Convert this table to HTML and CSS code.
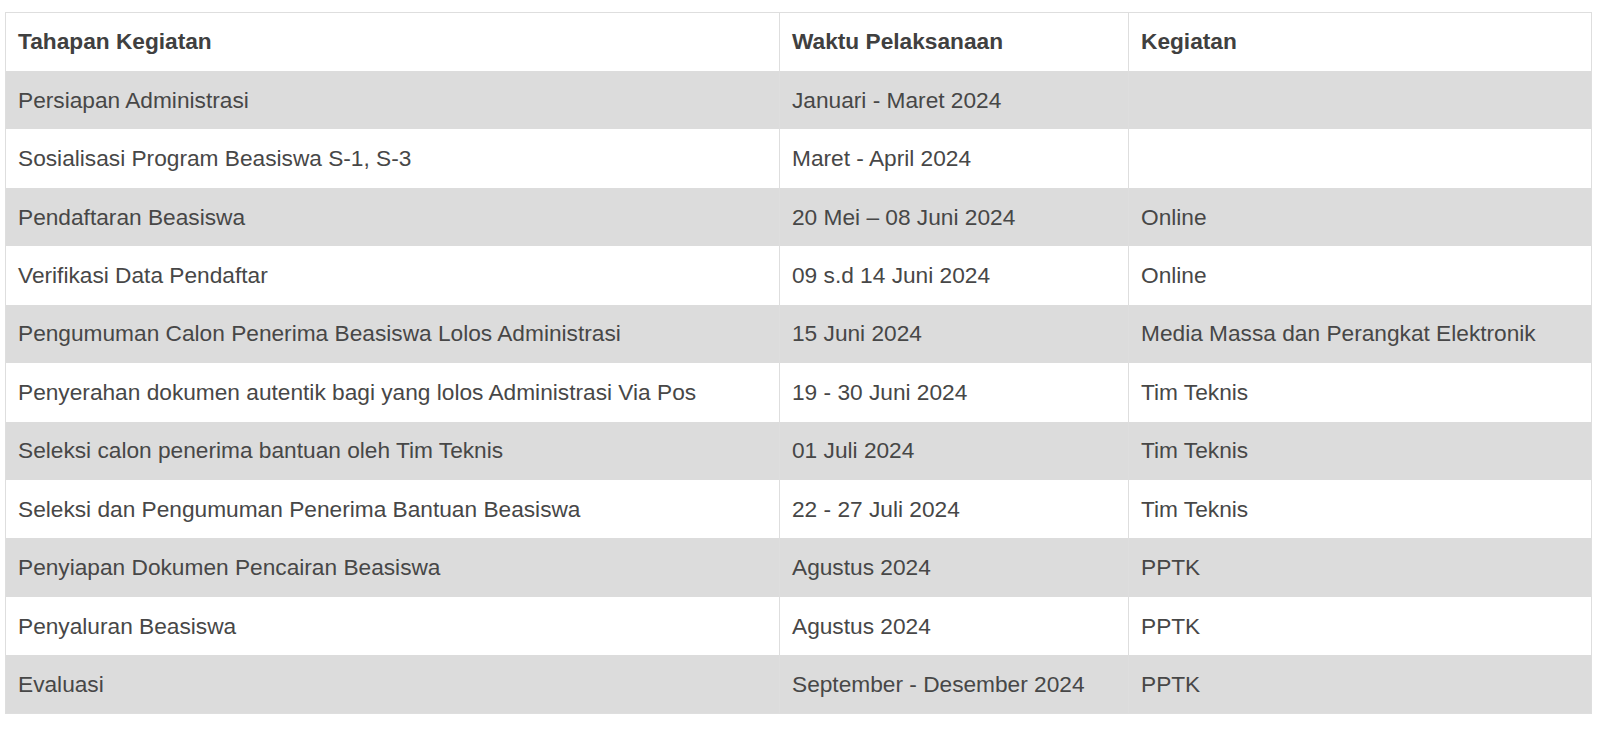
FILE: index.html
```html
<!DOCTYPE html>
<html lang="id">
<head>
<meta charset="utf-8">
<title>Jadwal Beasiswa</title>
<link rel="stylesheet" href="styles.css">
</head>
<body>
<div class="wrap">
<table class="schedule">
  <colgroup>
    <col class="c1"><col class="c2"><col class="c3">
  </colgroup>
  <thead>
    <tr><th>Tahapan Kegiatan</th><th>Waktu Pelaksanaan</th><th>Kegiatan</th></tr>
  </thead>
  <tbody>
    <tr><td>Persiapan Administrasi</td><td>Januari - Maret 2024</td><td></td></tr>
    <tr><td>Sosialisasi Program Beasiswa S-1, S-3</td><td>Maret - April 2024</td><td></td></tr>
    <tr><td>Pendaftaran Beasiswa</td><td>20 Mei – 08 Juni 2024</td><td>Online</td></tr>
    <tr><td>Verifikasi Data Pendaftar</td><td>09 s.d 14 Juni 2024</td><td>Online</td></tr>
    <tr><td>Pengumuman Calon Penerima Beasiswa Lolos Administrasi</td><td>15 Juni 2024</td><td>Media Massa dan Perangkat Elektronik</td></tr>
    <tr><td>Penyerahan dokumen autentik bagi yang lolos Administrasi Via Pos</td><td>19 - 30 Juni 2024</td><td>Tim Teknis</td></tr>
    <tr><td>Seleksi calon penerima bantuan oleh Tim Teknis</td><td>01 Juli 2024</td><td>Tim Teknis</td></tr>
    <tr><td>Seleksi dan Pengumuman Penerima Bantuan Beasiswa</td><td>22 - 27 Juli 2024</td><td>Tim Teknis</td></tr>
    <tr><td>Penyiapan Dokumen Pencairan Beasiswa</td><td>Agustus 2024</td><td>PPTK</td></tr>
    <tr><td>Penyaluran Beasiswa</td><td>Agustus 2024</td><td>PPTK</td></tr>
    <tr><td>Evaluasi</td><td>September - Desember 2024</td><td>PPTK</td></tr>
  </tbody>
</table>
</div>
</body>
</html>
```

FILE: styles.css
```css
html, body {
  margin: 0;
  padding: 0;
  background: #ffffff;
}

.wrap {
  padding: 12px 9px 0 5px;
}

.schedule {
  width: 1586px;
  border-collapse: collapse;
  table-layout: fixed;
  font-family: "Liberation Sans", Arial, sans-serif;
  font-size: 22.7px;
  color: #474747;
  border: 1px solid #dedede;
}

.c1 { width: 774px; }
.c2 { width: 349px; }
.c3 { width: 463px; }

.schedule th,
.schedule td {
  height: 58.45px;
  box-sizing: border-box;
  padding: 0 12px;
  text-align: left;
  vertical-align: middle;
  border-left: 1px solid #dedede;
  border-right: 1px solid #dedede;
  white-space: nowrap;
}

.schedule th {
  font-weight: bold;
  color: #404040;
}

.schedule tbody tr:nth-child(odd) td {
  background: #dcdcdc;
}
```
